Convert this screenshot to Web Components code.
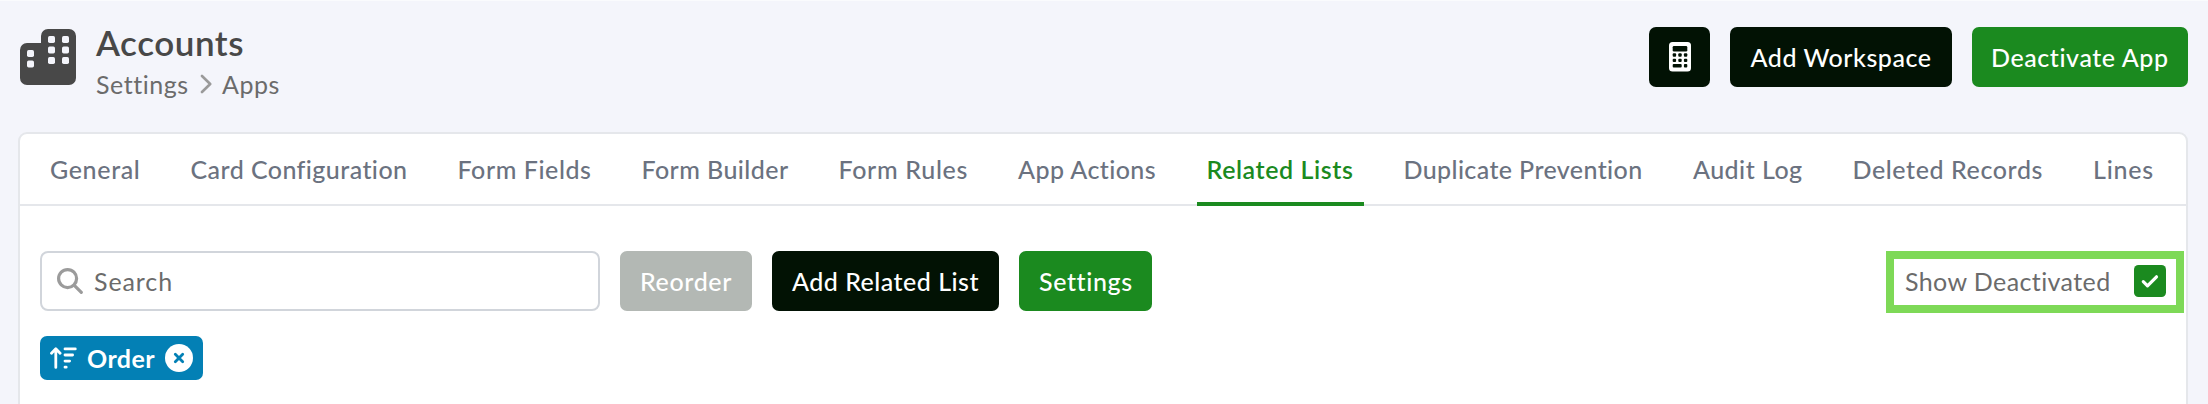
<!DOCTYPE html>
<html lang="en">
<head>
<meta charset="utf-8">
<title>Accounts</title>
<style>
	body {
		margin: 0;
		height: 404px;
		overflow: hidden;
		background: #f4f5fb;
		font-family: Lato, "Open Sans", sans-serif;
		font-size: 25px;
	}
</style>
</head>
<body>
<accounts-page></accounts-page>

<script>
(function() {
	function define(name, html, Base) {
		const template = document.createElement("template");
		template.innerHTML = html;

		window.customElements.define(name, class extends (Base || HTMLElement) {
			constructor() {
				super();
				this.attachShadow({mode: "open"});
				this.shadowRoot.appendChild(template.content.cloneNode(true));
			}
		});
	}

	define("accounts-page", `
		<style>
			:host {
				display: block;
				box-sizing: border-box;
				height: 404px;
				padding: 26px 20px 0 18px;
				border-top: 1px solid #fafbfd;
				overflow: hidden;
			}
			header {
				display: flex;
				justify-content: space-between;
				height: 105px;
			}
			.actions {
				display: flex;
				gap: 20px;
			}
			main {
				box-sizing: border-box;
				height: 320px;
				border: 2px solid #e5e7eb;
				border-radius: 9px;
				background: #fff;
			}
			nav {
				display: flex;
				gap: 30px;
				height: 70px;
				padding-left: 20px;
				border-bottom: 2px solid #e5e7eb;
			}
			.toolbar {
				display: flex;
				align-items: flex-start;
				gap: 20px;
				padding: 45px 2px 0 20px;
				height: 85px;
			}
			.toolbar show-toggle {
				margin-left: auto;
			}
			sort-tag {
				margin-left: 20px;
			}
		</style>
		<header>
			<page-title></page-title>
			<div class="actions">
				<app-button style="width: 61px">
					<svg width="22" height="30" viewBox="0 0 22 30">
						<rect width="22" height="29.5" rx="3.5" fill="#fff"/>
						<g fill="#021204">
							<rect x="3.7" y="4" width="14.6" height="5.5" rx="1.3"/>
							<rect x="3.7" y="11.3" width="3.4" height="3.4" rx="1"/>
							<rect x="9.3" y="11.3" width="3.4" height="3.4" rx="1"/>
							<rect x="14.9" y="11.3" width="3.4" height="3.4" rx="1"/>
							<rect x="3.7" y="16.7" width="3.4" height="3.4" rx="1"/>
							<rect x="9.3" y="16.7" width="3.4" height="3.4" rx="1"/>
							<rect x="14.9" y="16.7" width="3.4" height="3.4" rx="1"/>
							<rect x="3.7" y="22.1" width="9" height="3.4" rx="1"/>
							<rect x="14.9" y="22.1" width="3.4" height="3.4" rx="1"/>
						</g>
					</svg>
				</app-button>
				<app-button style="width: 222px"><fit-text width="181">Add Workspace</fit-text></app-button>
				<app-button kind="primary" style="width: 216px"><fit-text width="178">Deactivate App</fit-text></app-button>
			</div>
		</header>
		<main>
			<nav>
				<nav-tab><fit-text width="90.5">General</fit-text></nav-tab>
				<nav-tab><fit-text width="217">Card Configuration</fit-text></nav-tab>
				<nav-tab><fit-text width="134">Form Fields</fit-text></nav-tab>
				<nav-tab><fit-text width="147">Form Builder</fit-text></nav-tab>
				<nav-tab><fit-text width="129.5">Form Rules</fit-text></nav-tab>
				<nav-tab><fit-text width="138.5">App Actions</fit-text></nav-tab>
				<nav-tab active><fit-text width="147">Related Lists</fit-text></nav-tab>
				<nav-tab><fit-text width="239.5">Duplicate Prevention</fit-text></nav-tab>
				<nav-tab><fit-text width="109.5">Audit Log</fit-text></nav-tab>
				<nav-tab><fit-text width="190.5">Deleted Records</fit-text></nav-tab>
				<nav-tab><fit-text width="61">Lines</fit-text></nav-tab>
			</nav>
			<div class="toolbar">
				<search-box><fit-text width="79">Search</fit-text></search-box>
				<app-button kind="disabled" style="width: 132px"><fit-text width="92">Reorder</fit-text></app-button>
				<app-button style="width: 227px"><fit-text width="187">Add Related List</fit-text></app-button>
				<app-button kind="primary" style="width: 133px"><fit-text width="93">Settings</fit-text></app-button>
				<show-toggle><fit-text width="206">Show Deactivated</fit-text></show-toggle>
			</div>
			<sort-tag><fit-text width="68">Order</fit-text></sort-tag>
		</main>
	`);

	define("page-title", `
		<style>
			:host {
				display: flex;
				gap: 20px;
				padding: 2px 0 0 2px;
			}
			h1 {
				margin: -6px 0 0;
				font-size: 35px;
				font-weight: 600;
				line-height: 38px;
				color: #484848;
			}
			.crumbs {
				display: flex;
				align-items: center;
				margin-top: 7px;
				line-height: 32px;
				color: #6b6b6b;
			}
			.crumbs svg {
				margin: 0 10px 0 12px;
			}
		</style>
		<svg width="56" height="56" viewBox="0 0 56 56">
			<path fill="#484848" d="M7 14h14V7a7 7 0 0 1 7-7h21a7 7 0 0 1 7 7v42a7 7 0 0 1-7 7H7a7 7 0 0 1-7-7V21a7 7 0 0 1 7-7z"/>
			<g fill="#f4f5fb">
				<rect x="7" y="21" width="7" height="7" rx="1.7"/>
				<rect x="7" y="31.5" width="7" height="7" rx="1.7"/>
				<rect x="28" y="7" width="7" height="7" rx="1.7"/>
				<rect x="42" y="7" width="7" height="7" rx="1.7"/>
				<rect x="28" y="17.5" width="7" height="7" rx="1.7"/>
				<rect x="42" y="17.5" width="7" height="7" rx="1.7"/>
				<rect x="28" y="28" width="7" height="7" rx="1.7"/>
				<rect x="42" y="28" width="7" height="7" rx="1.7"/>
			</g>
		</svg>
		<div>
			<h1><fit-text width="148">Accounts</fit-text></h1>
			<div class="crumbs">
				<fit-text width="92">Settings</fit-text>
				<svg width="12" height="20" viewBox="0 0 12 20" fill="none" stroke="#9a9a9a" stroke-width="2.6" stroke-linecap="round" stroke-linejoin="round"><path d="M2 2l8.2 8L2 18"/></svg>
				<fit-text width="58">Apps</fit-text>
			</div>
		</div>
	`);

	define("app-button", `
		<style>
			:host {
				display: flex;
				align-items: center;
				justify-content: center;
				flex: none;
				height: 60px;
				border-radius: 7px;
				background: #021204;
				color: #fff;
				font-weight: 500;
			}
			:host([kind="primary"]) { background: #1b8a1f; }
			:host([kind="disabled"]) { background: #b3b8b4; }
		</style>
		<slot></slot>
	`);

	define("nav-tab", `
		<style>
			:host {
				display: block;
				box-sizing: border-box;
				height: 72px;
				padding: 0 10px;
				line-height: 71px;
				color: #6b7280;
				font-weight: 500;
			}
			:host([active]) {
				border-bottom: 4px solid #1b8a1f;
				color: #1b8a1f;
				font-weight: 600;
			}
		</style>
		<slot></slot>
	`);

	define("search-box", `
		<style>
			:host {
				display: flex;
				align-items: center;
				gap: 11px;
				box-sizing: border-box;
				flex: none;
				width: 560px;
				height: 60px;
				padding-left: 15px;
				border: 2px solid #d1d5db;
				border-radius: 8px;
				background: #fff;
				color: #6b6b6b;
			}
		</style>
		<svg width="26" height="26" viewBox="0 0 26 26" fill="none" stroke="#9b9b9b" stroke-linecap="round"><circle cx="10.6" cy="10.6" r="9" stroke-width="3.2"/><path stroke-width="3.2" d="M17.3 17.3l7 7"/></svg>
		<slot></slot>
	`);

	define("show-toggle", `
		<style>
			:host {
				display: flex;
				align-items: center;
				justify-content: space-between;
				box-sizing: border-box;
				width: 298px;
				height: 62px;
				padding: 0 10px 2px 11px;
				border: 8px solid #7ed957;
				color: #6b6b6b;
			}
		</style>
		<slot></slot>
		<svg width="32" height="32" viewBox="0 0 32 32"><rect width="32" height="32" rx="4.5" fill="#1b8a1f"/><path d="M9.3 16.7l4.2 4.1 9-9" fill="none" stroke="#fff" stroke-width="3.2" stroke-linecap="round" stroke-linejoin="round"/></svg>
	`);

	define("sort-tag", `
		<style>
			:host {
				display: flex;
				align-items: center;
				box-sizing: border-box;
				width: 163px;
				height: 44px;
				padding: 0 10px;
				border-radius: 7px;
				background: #0380b5;
				color: #fff;
				font-weight: 700;
			}
			.sort { margin-right: 10px; }
			.close { margin-left: auto; margin-top: -1px; }
		</style>
		<svg class="sort" width="27" height="22" viewBox="0 0 27 22" fill="none" stroke="#fff" stroke-width="2.8" stroke-linecap="round" stroke-linejoin="round"><path d="M5.8 20.4V2M1.5 6.2L5.8 1.8l4.3 4.4M15 1.9h10.3M15 8h7.6M15 14.1h4.6M15 20.2h1.2"/></svg>
		<slot></slot>
		<svg class="close" width="28" height="28" viewBox="0 0 28 28"><circle cx="14" cy="14" r="14" fill="#fff"/><path d="M10.3 10.3l7.4 7.4M17.7 10.3l-7.4 7.4" stroke="#0380b5" stroke-width="2.8" stroke-linecap="round"/></svg>
	`);

	// spreads its letters so that the label takes exactly the given width
	class Fit extends HTMLElement {
		connectedCallback() {
			const width = parseFloat(this.getAttribute("width"));
			const natural = this.getBoundingClientRect().width;

			this.style.letterSpacing = (width - natural) / this.textContent.length + "px";
			this.style.width = width + "px";
		}
	}

	define("fit-text", `
		<style>
			:host {
				display: inline-block;
				flex: none;
				white-space: nowrap;
			}
		</style>
		<slot></slot>
	`, Fit);
})();
</script>
</body>
</html>
